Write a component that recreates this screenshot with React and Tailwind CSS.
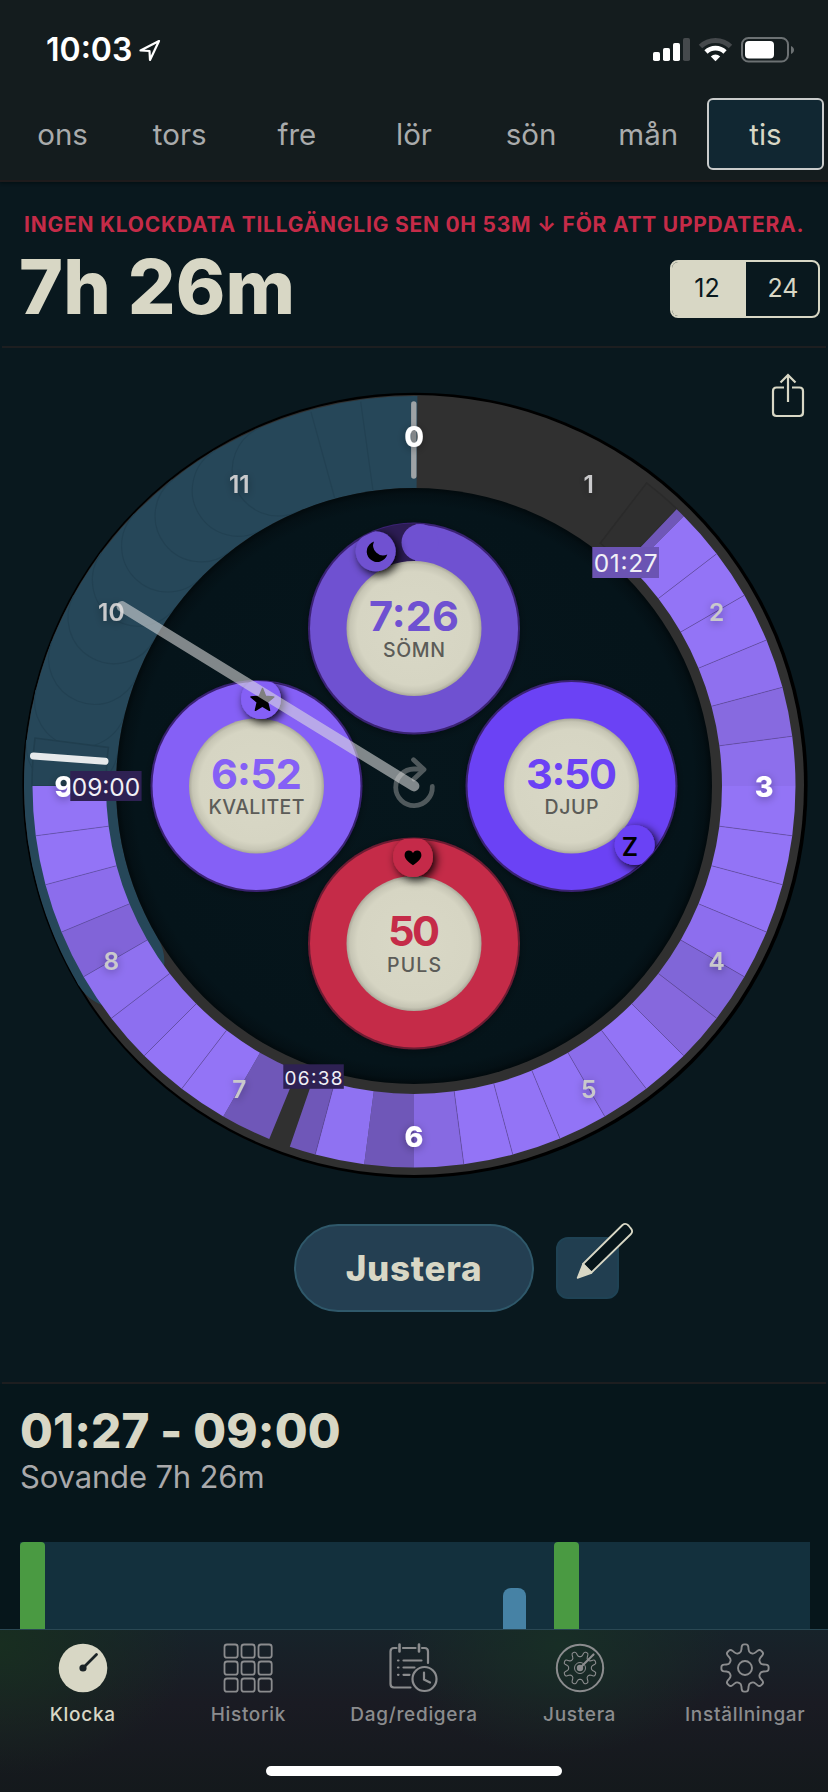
import { clsx } from "clsx";

const DAYS = ["ons", "tors", "fre", "lör", "sön", "mån", "tis"];

// centre of the big dial, in svg units
const CX = 414;
const CY = 786;

// clockwise from 12, degrees
const polar = (r, deg, cx = CX, cy = CY) => {
  const a = ((deg - 90) * Math.PI) / 180;
  return [(cx + r * Math.cos(a)).toFixed(2), (cy + r * Math.sin(a)).toFixed(2)];
};

const wedge = (r1, r2, from, to) => {
  const large = to - from > 180 ? 1 : 0;
  const [ax, ay] = polar(r2, from);
  const [bx, by] = polar(r2, to);
  const [cx, cy] = polar(r1, to);
  const [dx, dy] = polar(r1, from);
  return `M${ax} ${ay}A${r2} ${r2} 0 ${large} 1 ${bx} ${by}L${cx} ${cy}A${r1} ${r1} 0 ${large} 0 ${dx} ${dy}Z`;
};

const arc = (r, from, to, cx, cy) => {
  const large = to - from > 180 ? 1 : 0;
  return `M${polar(r, from, cx, cy).join(" ")}A${r} ${r} 0 ${large} 1 ${polar(r, to, cx, cy).join(" ")}`;
};

const gear = (cx, cy, outer, inner, rotate = 0) => {
  const pts = [];
  for (let i = 0; i < 8; i++) {
    const a = i * 45 + rotate;
    pts.push(polar(inner, a - 13.5, cx, cy), polar(outer, a - 7.5, cx, cy));
    pts.push(polar(outer, a + 7.5, cx, cy), polar(inner, a + 13.5, cx, cy));
  }
  // cut the corners so that the teeth look rounded
  const mix = (p, q, t) => [+p[0] + (q[0] - p[0]) * t, +p[1] + (q[1] - p[1]) * t];
  return (
    pts
      .map((p, i) => {
        const prev = pts[(i + pts.length - 1) % pts.length];
        const next = pts[(i + 1) % pts.length];
        const a = mix(p, prev, 0.35);
        const b = mix(p, next, 0.35);
        return `${i ? "L" : "M"}${a.join(" ")}Q${p.join(" ")} ${b.join(" ")}`;
      })
      .join("") + "Z"
  );
};

// sleep phases, degrees on the dial
const PHASES = [
  [43.5, 45, "#6f57b8"],
  [45, 52.5, "#9374f6"],
  [52.5, 60, "#9374f6"],
  [60, 67.5, "#9374f6"],
  [67.5, 75, "#8f70ef"],
  [75, 82.5, "#876ae0"],
  [82.5, 90, "#8d6fec"],
  [90, 97.5, "#9374f6"],
  [97.5, 105, "#9374f6"],
  [105, 112.5, "#9374f6"],
  [112.5, 120, "#8d6eee"],
  [120, 127.5, "#8066d8"],
  [127.5, 135, "#8668dd"],
  [135, 142.5, "#9374f6"],
  [142.5, 150, "#8b6dea"],
  [150, 157.5, "#9274f6"],
  [157.5, 165, "#9374f6"],
  [165, 172.5, "#9374f6"],
  [172.5, 180, "#876ae2"],
  [180, 187.5, "#6f57b8"],
  [187.5, 195, "#8f72f2"],
  [195, 199, "#6f57b8"],
  [202.3, 210, "#6f57b8"],
  [210, 217.5, "#9374f6"],
  [217.5, 225, "#9374f6"],
  [225, 232.5, "#8d6ff0"],
  [232.5, 240, "#8f71f0"],
  [240, 247.5, "#8164d8"],
  [247.5, 255, "#8c6dec"],
  [255, 262.5, "#9374f6"],
  [262.5, 270, "#9374f6"],
];

const HOURS = [
  [1, 30], [2, 60], [4, 120], [5, 150], [7, 210], [8, 240], [10, 300], [11, 330],
];

const QUARTERS = [[0, 0], [3, 90], [6, 180], [9, 270]];

const DIALS = [
  { cx: 414, cy: 628.5, color: "#6f51d1", edge: "#3a2173", value: "7:26", w: 90, label: "SÖMN", lw: 62 },
  { cx: 256.5, cy: 786, color: "#8560f6", edge: "#3a2173", value: "6:52", w: 91, label: "KVALITET", lw: 96 },
  { cx: 571.5, cy: 786, color: "#6b42f5", edge: "#3a2173", value: "3:50", w: 91, label: "DJUP", lw: 54 },
  { cx: 414, cy: 943.5, color: "#c52b48", edge: "#6d1a33", value: "50", w: 52, label: "PULS", lw: 54 },
];

const StatusBar = () => (
  <div className="flex h-[98px] items-start justify-between pt-[30px] pr-[33px] pl-[46px]">
    <div className="flex items-center text-white">
      <span className="text-[32px] leading-10 font-semibold">10:03</span>
      <svg className="ml-1.5 h-6 w-6" viewBox="0 0 24 24" fill="none" stroke="#fff" strokeWidth="2.2" strokeLinejoin="round">
        <path d="M21 3L2.5 12.5L11.5 13L12 22Z" />
      </svg>
    </div>
    <svg className="mt-[3px] h-8 w-[142px]" viewBox="653 33 142 32">
      <rect x="653" y="52" width="7" height="9" rx="1.8" fill="#fff" />
      <rect x="663" y="48" width="7" height="13" rx="1.8" fill="#fff" />
      <rect x="673" y="43" width="7" height="18" rx="1.8" fill="#fff" />
      <rect x="683" y="38" width="7" height="23" rx="1.8" fill="#45494c" />
      <g fill="none" strokeWidth="5">
        <path d="M700.5 46.5A21.5 21.5 0 0 1 730.5 46.5" stroke="#45494c" />
        <path d="M706 52A13.500 13.500 0 0 1 725 52" stroke="#fff" strokeWidth="4.600" />
      </g>
      <path d="M710.800 56.400A7 7 0 0 1 720.200 56.400L715.500 61.200Z" fill="#fff" />
      <rect x="742" y="38" width="46" height="23.500" rx="6.500" fill="none" stroke="#6c7173" strokeWidth="2" />
      <rect x="745" y="41" width="29" height="17.500" rx="4" fill="#fff" />
      <path d="M791 46C795 47.500 795 52.500 791 54Z" fill="#6c7173" />
    </svg>
  </div>
);

const DayTabs = () => (
  <nav className="grid h-[72px] grid-cols-7 pr-1 pl-1">
    {DAYS.map((day) => (
      <button
        key={day}
        className={clsx(
          "flex items-center justify-center rounded-md text-[29.5px]",
          day === "tis" ? "border-2 border-[#c9cbcb] bg-[#112732] text-[#d8d7c5]" : "text-[#a9abac]"
        )}
      >
        {day}
      </button>
    ))}
  </nav>
);

const Summary = () => (
  <section className="mx-0.5 flex h-[166px] flex-col border-b-2 border-[#1d1e20] pt-[31px]">
    <p className="pl-[22px] text-[21px] leading-6 font-bold tracking-[0.76px] whitespace-nowrap text-[#c52b48]">
      INGEN KLOCKDATA TILLGÄNGLIG SEN 0H 53M ↓ FÖR ATT UPPDATERA.
    </p>
    <div className="flex items-start justify-between pt-2 pr-1.5 pl-[17px]">
      <h1 className="text-[75px] leading-[84px] font-extrabold tracking-[0.2px] text-[#d8d7c5]">7h 26m</h1>
      <div className="mt-[15px] flex h-[58px] w-[150px] overflow-hidden rounded-lg border-2 border-[#d8d7c5] text-[25px]">
        <button className="w-[74px] bg-[#d8d7c5] pr-1 text-[#09181e]">12</button>
        <button className="flex-1 pl-0.5 text-[#d8d7c5]">24</button>
      </div>
    </div>
  </section>
);

const ShareIcon = () => (
  <svg className="absolute top-6 right-[22px] h-[46px] w-[36px]" viewBox="770 372 36 46" fill="none" stroke="#d8d7c5" strokeWidth="2.2">
    <path d="M784 387.500H776.500Q773 387.500 773 391V412.500Q773 416 776.500 416H799.500Q803 416 803 412.500V391Q803 387.500 799.500 387.500H792" />
    <path d="M788 402V375.500M780.500 382.500L788 375L795.500 382.500" />
  </svg>
);

const Knob = ({ x, y, color, children }) => (
  <g>
    <circle cx={x} cy={y} r="20" fill={color} filter="url(#knob)" />
    {children}
  </g>
);

const Tag = ({ x, y, w, h, fill, size, tw, base, children }) => (
  <g>
    <rect x={x} y={y} width={w} height={h} fill={fill} />
    <text x={x + w / 2} y={base} fontSize={size} textAnchor="middle" textLength={tw} fill="#f1f0f6">
      {children}
    </text>
  </g>
);

const SleepDial = () => (
  <svg className="block h-[868px] w-full" viewBox="0 348 828 868">
    <defs>
      <radialGradient id="face">
        <stop offset="0" stopColor="#06161c" />
        <stop offset="0.94" stopColor="#05141a" />
        <stop offset="0.98" stopColor="#041015" />
        <stop offset="1" stopColor="#020a0d" />
      </radialGradient>
      <radialGradient id="cream">
        <stop offset="0" stopColor="#d9d8c6" />
        <stop offset="0.84" stopColor="#d6d5c3" />
        <stop offset="0.95" stopColor="#c6c5b4" />
        <stop offset="1" stopColor="#a9a899" />
      </radialGradient>
      <filter id="knob" x="-70%" y="-70%" width="240%" height="240%">
        <feDropShadow dx="3" dy="3" stdDeviation="5" floodColor="#000" floodOpacity="0.95" />
      </filter>
      <filter id="soft" x="-30%" y="-30%" width="160%" height="160%">
        <feDropShadow dx="0" dy="2" stdDeviation="4" floodColor="#000" floodOpacity="0.35" />
      </filter>
      <clipPath id="discs">
        {DIALS.map((d) => (
          <circle key={d.label} cx={d.cx} cy={d.cy} r="105" />
        ))}
      </clipPath>
    </defs>

    {/* ring */}
    <circle cx="415" cy="785.300" r="392.600" fill="#000" />
    <circle cx={CX} cy="785" r="390" fill="#303030" />
    <path d={wedge(298, 390, 239.25, 360.5)} fill="#264759" />
    <circle cx={polar(344, 239.25)[0]} cy={polar(344, 239.25)[1]} r="46" fill="#264759" />
    <g fill="none" stroke="#224152" strokeWidth="1.1">
      {[336.75, 329.25, 321.75, 314.25, 306.75, 299.25, 291.75, 284.25, 276.75].map((deg) => (
        <path
          key={deg}
          d={`M${polar(390, deg).join(" ")}A46 46 0 0 0 ${polar(298, deg).join(" ")}`}
        />
      ))}
      <path d={`M${polar(388, 344.6).join(" ")}L${polar(299, 344.6).join(" ")}`} />
      <path d={`M${polar(388, 352.1).join(" ")}L${polar(299, 352.1).join(" ")}`} />
    </g>
    <path d={wedge(306, 382, 37.5, 43.5)} fill="#2f2f2f" stroke="#2a2a2a" strokeWidth="1.500" />
    <path d={wedge(308, 382, 270, 277.2)} fill="#254557" stroke="#203e4e" strokeWidth="1.500" />

    {PHASES.map(([from, to, color]) => (
      <path key={from} d={wedge(308, 381.5, from, to)} fill={color} />
    ))}
    <g stroke="#5a4494" strokeOpacity="0.55" strokeWidth="1">
      {PHASES.filter(([from]) => from > 45 && ![90, 180, 187.5, 202.3, 210].includes(from)).map(([from]) => (
        <path key={from} d={`M${polar(308, from).join(" ")}L${polar(381.5, from).join(" ")}`} />
      ))}
    </g>

    <circle cx={CX} cy={CY} r="298" fill="url(#face)" />

    {/* numerals */}
    <path d="M413.800 404V476" stroke="#b4b4b4" strokeOpacity="0.85" strokeWidth="5.400" strokeLinecap="round" />
    <g textAnchor="middle" filter="url(#soft)">
      <g fontSize="24.500" fontWeight="600" fill="#c9c9cb">
        {HOURS.map(([n, deg]) => (
          <text key={n} x={polar(349.5, deg)[0]} y={+polar(349.5, deg)[1] + 9.5}>{n}</text>
        ))}
      </g>
      <g fontSize="28.500" fontWeight="800" fill="#fff">
        {QUARTERS.map(([n, deg]) => (
          <text key={n} x={polar(350, deg)[0]} y={+polar(350, deg)[1] + 11}>{n}</text>
        ))}
      </g>
    </g>

    {/* reset */}
    <g fill="none" stroke="#50595c" strokeWidth="4.800" strokeLinecap="round" strokeLinejoin="round">
      <path d="M432.300 786.500A18.300 18.300 0 1 1 414 769H423" />
      <path d="M413.500 759.800L424 769.500L414 779" />
    </g>

    {/* small dials */}
    {DIALS.map((d) => (
      <g key={d.label}>
        <circle cx={d.cx} cy={d.cy} r="106" fill={d.edge} filter="url(#soft)" />
        <circle cx={d.cx} cy={d.cy} r="104" fill={d.color} />
      </g>
    ))}
    <path d={arc(86, 336, 361, 414, 628.5)} fill="none" stroke="#2c1c54" strokeWidth="38" />
    <circle cx="420" cy="542.500" r="18.500" fill="#6f51d1" />
    {DIALS.map((d) => (
      <circle key={d.label} cx={d.cx} cy={d.cy} r="67.500" fill="url(#cream)" />
    ))}

    <g clipPath="url(#discs)">
      <Knob x={375.700} y={551.3} color="#6f51d1">
        <path d="M374 541.500A10.500 10.500 0 1 0 387.300 554.500A10 10 0 0 1 374 541.500Z" fill="#000" />
      </Knob>
      <Knob x={261} y={699} color="#8560f6">
        <path
          d="M262.500 688.500L265.600 696.300L273.800 697L267.500 702.200L269.500 710.300L262.300 706L255.400 710.300L257.300 702.200L251 697L259.300 696.300Z"
          fill="#000"
          stroke="#000"
          strokeWidth="1.500"
          strokeLinejoin="round"
        />
      </Knob>
      <Knob x={634.700} y={845} color="#6b42f5">
        <text x="630" y="855.500" fontSize="25" fontWeight="600" textAnchor="middle" fill="#000">Z</text>
      </Knob>
      <Knob x={413} y={857} color="#c52b48">
        <path
          d="M413 865.300C408 861.500 404.600 858.700 404.600 854.900C404.600 850 410.800 849 413 853C415.200 849 421.400 850 421.400 854.900C421.400 858.700 418 861.500 413 865.300Z"
          fill="#000"
        />
      </Knob>
    </g>

    {DIALS.map((d) => (
      <g key={d.label} textAnchor="middle">
        <text x={d.cx} y={d.cy + 2.7} fontSize="41.500" fontWeight="700" textLength={d.w} fill={d.color}>
          {d.value}
        </text>
        <text x={d.cx} y={d.cy + 28} fontSize="19.500" fontWeight="500" textLength={d.lw} fill="#5c5c58">
          {d.label}
        </text>
      </g>
    ))}

    {/* hands */}
    <path d="M33.500 756L105 761.300" stroke="#e6e9eb" strokeWidth="7" strokeLinecap="round" />
    <path d="M122 606.500L414 786" stroke="#dfdfdf" strokeOpacity="0.57" strokeWidth="10.800" strokeLinecap="round" />

    <Tag x={592.300} y={547} w={66.7} h={31} fill="#6b54b3" size={24.500} tw={64} base={571.7}>01:27</Tag>
    <Tag x={70.300} y={771} w={71.3} h={30} fill="#2e2153" size={24.500} tw={68.500} base={795.5}>09:00</Tag>
    <Tag x={283.300} y={1064.3} w={60.500} h={24.500} fill="#2e2153" size={19} tw={58} base={1084.8}>06:38</Tag>
  </svg>
);

const PencilIcon = () => (
  <svg className="absolute -top-[18px] left-3.5 h-16 w-[66px]" viewBox="572 1221 66 64" strokeLinejoin="round">
    <path d="M583 1264L622.500 1225Q625.500 1222.500 628.500 1225.500L630.500 1228Q633.500 1231 631 1234L591.500 1272.500Z" fill="#06151b" stroke="#d8d7c5" strokeWidth="1.800" />
    <path d="M583 1264L577.500 1278L591.500 1273Z" fill="#d8d7c5" stroke="#d8d7c5" strokeWidth="1.500" />
  </svg>
);

const Actions = () => (
  <div className="flex items-start gap-[22px] pt-2 pl-[294px]">
    <button className="h-[88px] w-60 rounded-full border-2 border-[#2f586a] bg-[#243f52] text-[35px] font-extrabold tracking-[0.7px] text-[#d8d7c5]">
      Justera
    </button>
    <button className="relative mt-[13px] h-[62px] w-[63px] rounded-xl border-2 border-[#1f4254] bg-[#213e50]">
      <PencilIcon />
    </button>
  </div>
);

const History = () => (
  <section className="flex h-[245px] flex-col bg-[#06161b]">
    <h2 className="pt-[19px] pl-5 text-[47.5px] leading-[56px] font-extrabold tracking-[0.15px] text-[#d8d7c5]">01:27 - 09:00</h2>
    <p className="pl-5 text-[31px] leading-9 tracking-[-0.15px] text-[#a9a9ab]">Sovande 7h 26m</p>
    <div className="mt-auto mr-[18px] ml-5 flex h-[87px] items-end bg-[#13303d]">
      <div className="h-full w-[25px] rounded-t bg-[#4a9a42]" />
      <div className="ml-[458px] h-[41px] w-[23px] rounded-t-lg bg-[#4682a5]" />
      <div className="ml-7 h-full w-[25px] rounded-t bg-[#4a9a42]" />
    </div>
  </section>
);

const KlockaIcon = () => (
  <svg className="size-[50px]" viewBox="-25 -25 50 50">
    <circle r="24.300" fill="#d8d7c5" />
    <circle r="3.600" fill="#1a2326" />
    <path d="M0 0L13.500 -13.500" stroke="#1a2326" strokeWidth="2.800" strokeLinecap="round" />
  </svg>
);

const HistorikIcon = () => (
  <svg className="size-[50px]" viewBox="-25 -25 50 50" fill="none" stroke="currentColor" strokeWidth="1.800">
    {[-23.5, -6.5, 10.5].map((y) =>
      [-23.5, -6.5, 10.5].map((x) => <rect key={`${x}${y}`} x={x} y={y} width="13.200" height="13.200" rx="2.500" />)
    )}
  </svg>
);

const DagIcon = () => (
  <svg className="size-[50px]" viewBox="388.500 1643 50 50" fill="none" stroke="currentColor" strokeWidth="2.200" strokeLinecap="round">
    <path d="M396 1648H393.500Q390 1648 390 1651.500V1684Q390 1687.500 393.500 1687.500H410M402.500 1648H415M421.500 1648H424Q427.500 1648 427.500 1651.500V1663" />
    <path d="M399 1644.500V1651.500M418.500 1644.500V1651.500" strokeWidth="2.600" />
    <path d="M403 1660.500H421M403 1667.500H414M403 1674.800H409M397.500 1660.500H398M397.500 1667.500H398M397.500 1674.800H398" />
    <circle cx="424" cy="1679" r="12" />
    <path d="M423.500 1672.500V1679.500L429.500 1682.500" />
  </svg>
);

const JusteraIcon = () => (
  <svg className="size-[50px]" viewBox="-25 -25 50 50" fill="none" stroke="currentColor">
    <circle r="23.200" strokeWidth="2" />
    <path d={gear(0, 0, 16.8, 11.5, 22.5)} strokeWidth="1.100" />
    <circle r="5.500" strokeWidth="1" />
    <circle r="3.200" fill="currentColor" stroke="none" />
    <path d="M0 0L13.500 -13.500" strokeWidth="2.200" strokeLinecap="round" />
  </svg>
);

const SettingsIcon = () => (
  <svg className="size-[50px]" viewBox="-25 -25 50 50" fill="none" stroke="currentColor" strokeWidth="1.900">
    <path d={gear(0, 0, 23.8, 16.3)} />
    <circle r="7" />
  </svg>
);

const TABS = [
  { label: "Klocka", Icon: KlockaIcon },
  { label: "Historik", Icon: HistorikIcon },
  { label: "Dag/redigera", Icon: DagIcon },
  { label: "Justera", Icon: JusteraIcon },
  { label: "Inställningar", Icon: SettingsIcon },
];

const TabBar = () => (
  <footer className="flex h-[163px] flex-col items-center border-t border-[#2a4853] bg-[#171a1f] bg-[radial-gradient(ellipse_190px_130px_at_0px_15px,#182e20,transparent),radial-gradient(ellipse_170px_110px_at_560px_15px,#182e26,transparent),linear-gradient(to_bottom,#17232a,#1a1b23_45%,#14191c)]">
    <div className="grid w-full grid-cols-5">
      {TABS.map(({ label, Icon }, i) => (
        <button
          key={label}
          className={clsx("flex flex-col items-center pt-[13px]", i === 0 ? "text-[#d8d7c5]" : "text-[#8b8c8e]")}
        >
          <Icon />
          <span className="mt-2.5 text-[19px] leading-6 font-medium tracking-[0.7px]">{label}</span>
        </button>
      ))}
    </div>
    <div className="mt-[39px] h-2.5 w-[296px] rounded-full bg-white" />
  </footer>
);

export default function App() {
  return (
    <div className="h-[1792px] w-[828px] overflow-hidden bg-[#09181e] font-[Inter,sans-serif]">
      <header className="h-[182px] border-b-2 border-[#1e1b1c] bg-[#141c1e] shadow-[0_1px_3px_#020f12]">
        <StatusBar />
        <DayTabs />
      </header>
      <Summary />
      <main className="relative h-[1036px]">
        <ShareIcon />
        <SleepDial />
        <Actions />
        <div className="mx-0.5 mt-[70px] h-0.5 bg-[#1d1e20]" />
      </main>
      <History />
      <TabBar />
    </div>
  );
}
